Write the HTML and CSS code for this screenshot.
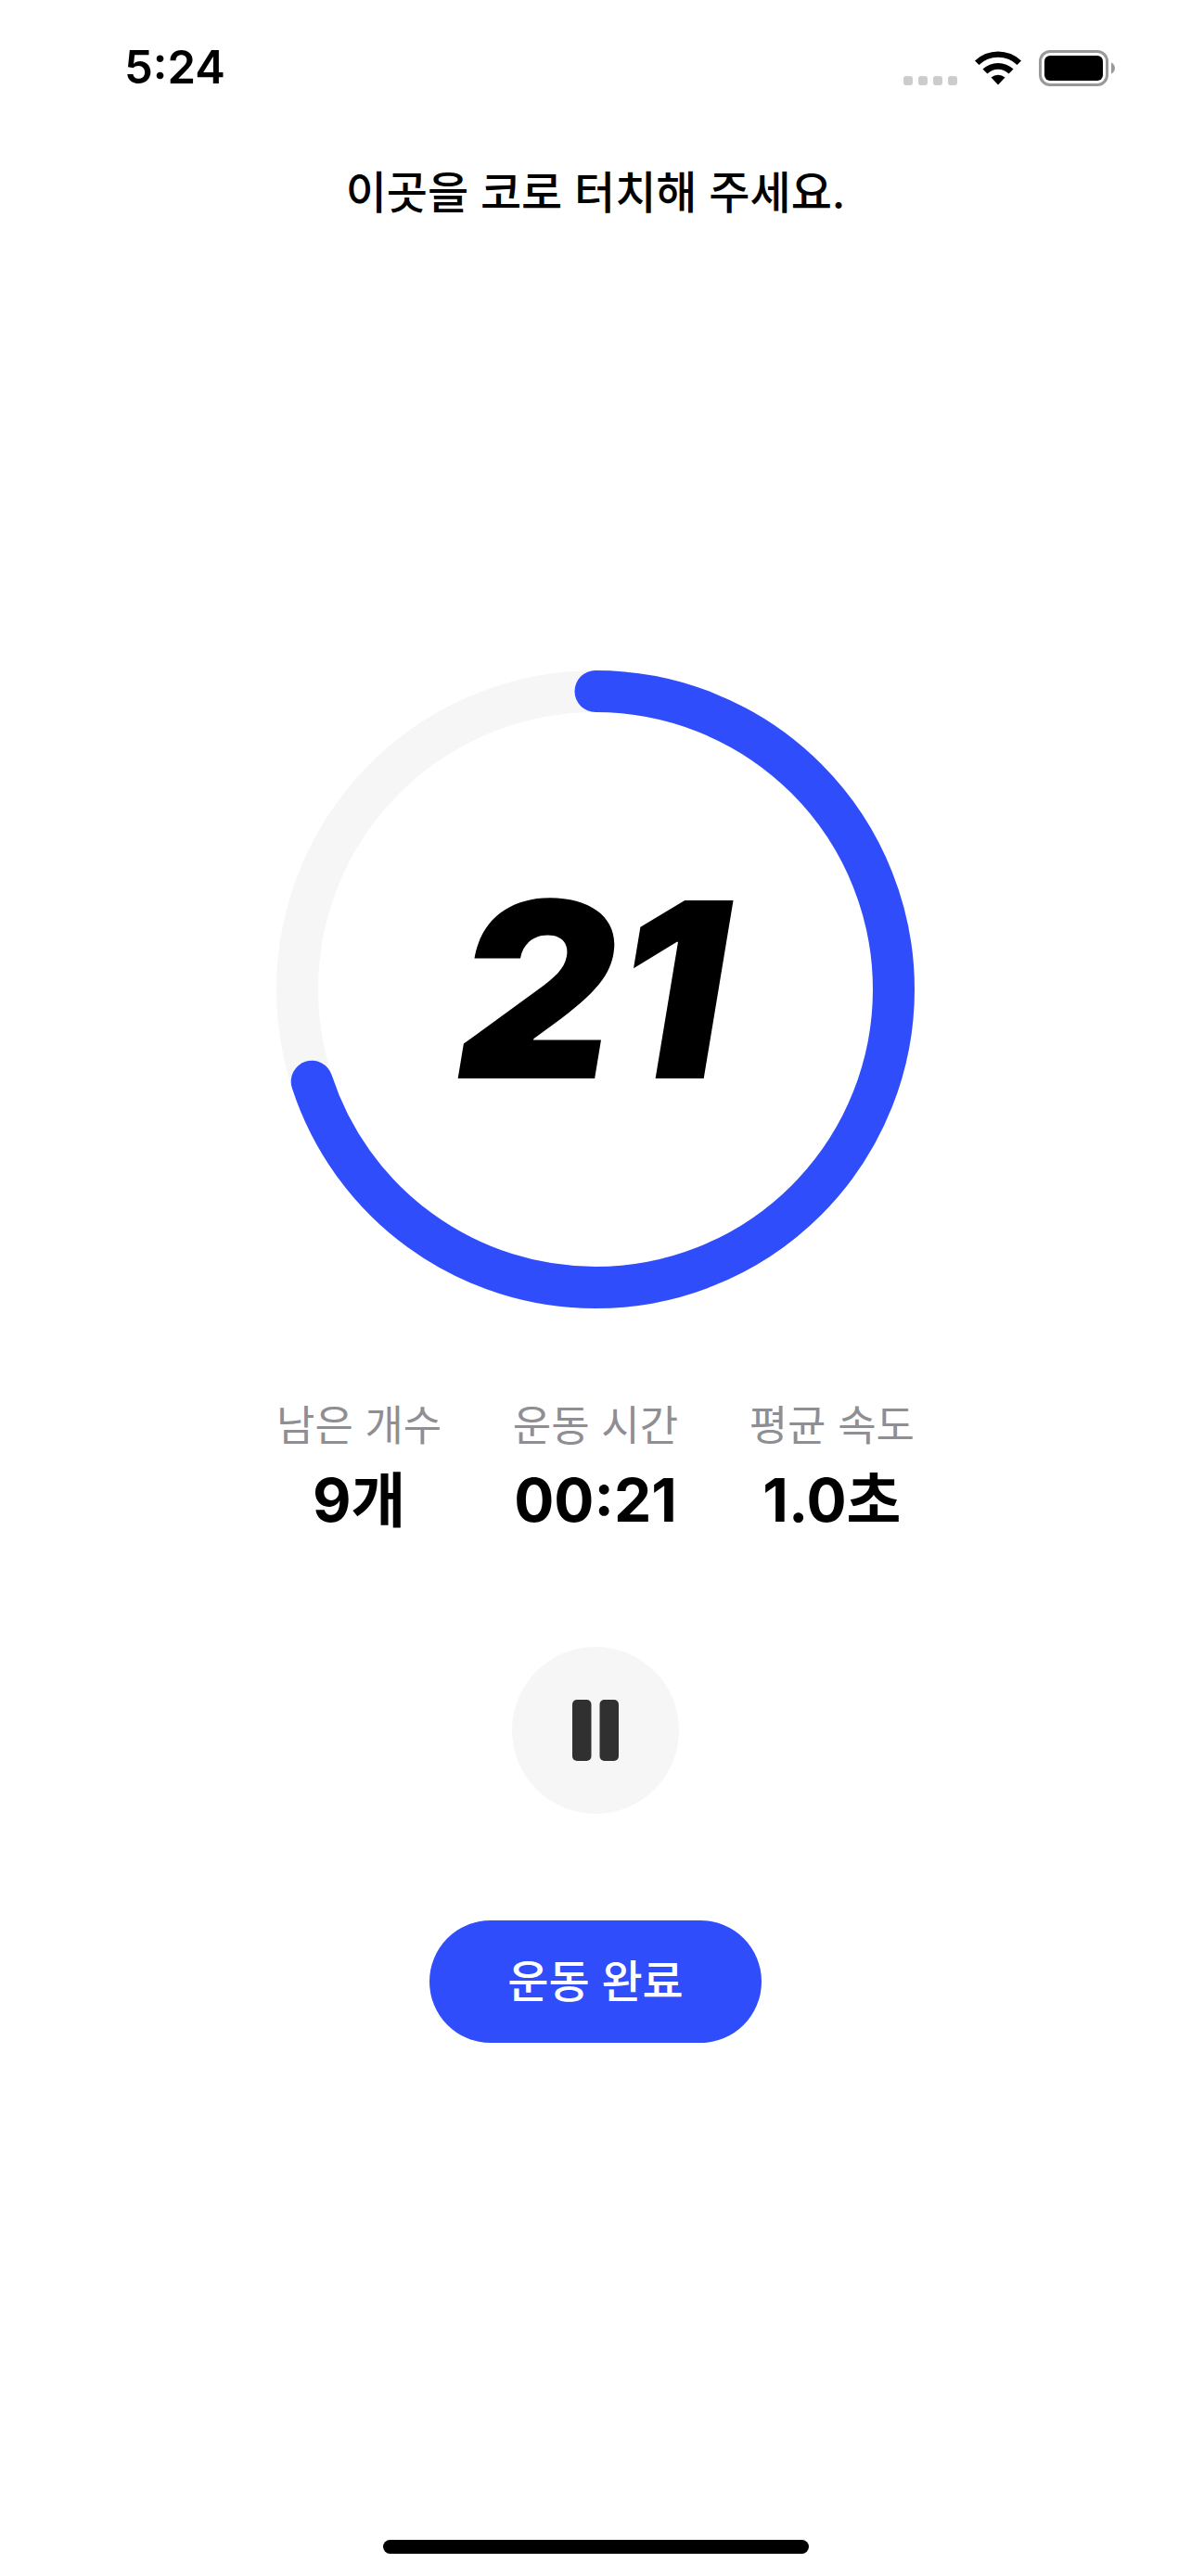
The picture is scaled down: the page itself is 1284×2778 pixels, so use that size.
FILE: index.html
```html
<!DOCTYPE html>
<html lang="ko">
<head>
    <meta charset="UTF-8">
    <meta name="viewport" content="width=device-width, initial-scale=1.0">
    <title>운동</title>
    <link rel="stylesheet" href="styles.css">
</head>
<body>

<header class="status-bar">
    <span class="time">5:24</span>
    <div class="status-icons">
        <svg width="58" height="38" viewBox="0 0 58 38" fill="#cccccc" aria-hidden="true">
            <rect x="0" y="28" width="10" height="10" rx="3"/>
            <rect x="16" y="28" width="10" height="10" rx="3"/>
            <rect x="32" y="28" width="10" height="10" rx="3"/>
            <rect x="48" y="28" width="10" height="10" rx="3"/>
        </svg>
        <svg width="52" height="38" viewBox="0 0 52 38" aria-hidden="true">
            <path d="M1 11.5A36 36 0 0 1 51 11.5L46.5 16A29.5 29.5 0 0 0 5.500 16Z"/>
            <path d="M9.500 20.500A24 24 0 0 1 42.500 20.500L37.500 25.500A16.500 16.500 0 0 0 14.500 25.500Z"/>
            <path d="M18.500 29.500A11.500 11.500 0 0 1 33.500 29.500L26 37.500Z"/>
        </svg>
        <svg width="82" height="39" viewBox="0 0 82 39" aria-hidden="true">
            <rect x="1.5" y="1.5" width="72" height="36" rx="10.500" fill="none" stroke="#999999" stroke-width="3"/>
            <rect x="6" y="6" width="63" height="27" rx="6"/>
            <path d="M78 13.500C80.500 14.500 82 17 82 19.500S80.500 24.500 78 25.500Z" fill="#999999"/>
        </svg>
    </div>
</header>

<main class="workout">
    <h1 class="guide">이곳을 코로 터치해 주세요.</h1>

    <div class="progress">
        <svg class="ring" viewBox="0 0 688 688" aria-hidden="true">
            <circle class="ring-track" cx="344" cy="344" r="321.5"/>
            <circle class="ring-value" cx="344" cy="344" r="321.5" pathLength="100" stroke-dasharray="70 100" transform="rotate(-90 344 344)"/>
        </svg>
        <span class="count">21</span>
    </div>

    <dl class="stats">
        <div class="stat">
            <dt>남은 개수</dt>
            <dd>9개</dd>
        </div>
        <div class="stat">
            <dt>운동 시간</dt>
            <dd>00:21</dd>
        </div>
        <div class="stat">
            <dt>평균 속도</dt>
            <dd>1.0초</dd>
        </div>
    </dl>

    <button class="pause-button" type="button" aria-label="일시정지">
        <svg width="50" height="66" viewBox="0 0 50 66" fill="#303030" aria-hidden="true">
            <rect x="0" y="0" width="20.500" height="66" rx="5"/>
            <rect x="29.500" y="0" width="20.500" height="66" rx="5"/>
        </svg>
    </button>

    <button class="done-button" type="button">운동 완료</button>
</main>

<footer class="home-area">
    <div class="home-indicator"></div>
</footer>

</body>
</html>
```
FILE: styles.css
```css
* {
    box-sizing: border-box;
}
body {
    display: flex;
    flex-direction: column;
    min-height: 100vh;
    margin: 0;
    background-color: #ffffff;
    color: #000000;
    font-family: Inter, "Noto Sans CJK KR", sans-serif;
}
.status-bar {
    display: flex;
    justify-content: space-between;
    align-items: center;
    height: 146px;
    padding: 0 82px 0 134px;
}
.time {
    font-size: 49px;
    font-weight: 600;
    line-height: 60px;
}
.status-icons {
    display: flex;
    align-items: center;
    gap: 18px;
}
.workout {
    display: flex;
    flex: 1;
    flex-direction: column;
    align-items: center;
    padding-top: 32px;
}
.guide {
    margin: 0;
    font-size: 48px;
    font-weight: 500;
    line-height: 60px;
}
.progress {
    display: grid;
    place-items: center;
    width: 688px;
    max-width: 90%;
    margin-top: 485px;
}
.ring,
.count {
    grid-area: 1 / 1;
}
.ring {
    display: block;
    width: 100%;
}
.ring circle {
    fill: none;
    stroke-width: 45px;
}
.ring .ring-track {
    stroke: #f6f6f6;
}
.ring .ring-value {
    stroke: #304dfc;
    stroke-linecap: round;
}
.count {
    padding-right: 8px;
    font-size: 264px;
    font-style: italic;
    font-weight: 900;
    line-height: 320px;
}
.stats {
    display: flex;
    justify-content: space-between;
    width: 688px;
    max-width: 90%;
    margin: 97px 0 0;
}
.stat {
    text-align: center;
}
.stat dt {
    color: #8e8e93;
    font-size: 45px;
    font-weight: 400;
    line-height: 60px;
}
.stat dd {
    margin: 10px 0 0;
    font-size: 64px;
    font-weight: 700;
    line-height: 80px;
}
button {
    border: 0;
    padding: 0;
    font-family: inherit;
    cursor: pointer;
}
.pause-button {
    display: flex;
    justify-content: center;
    align-items: center;
    width: 180px;
    height: 180px;
    margin-top: 118px;
    border-radius: 50%;
    background-color: #f6f6f6;
}
.done-button {
    margin-top: 115px;
    padding: 36px 84px;
    border-radius: 67px;
    background-color: #304dfc;
    color: #ffffff;
    font-size: 48px;
    font-weight: 500;
    line-height: 60px;
}
.home-area {
    display: flex;
    justify-content: center;
    padding-bottom: 24px;
}
.home-indicator {
    width: 459px;
    height: 15px;
    border-radius: 8px;
    background-color: #000000;
}
```
